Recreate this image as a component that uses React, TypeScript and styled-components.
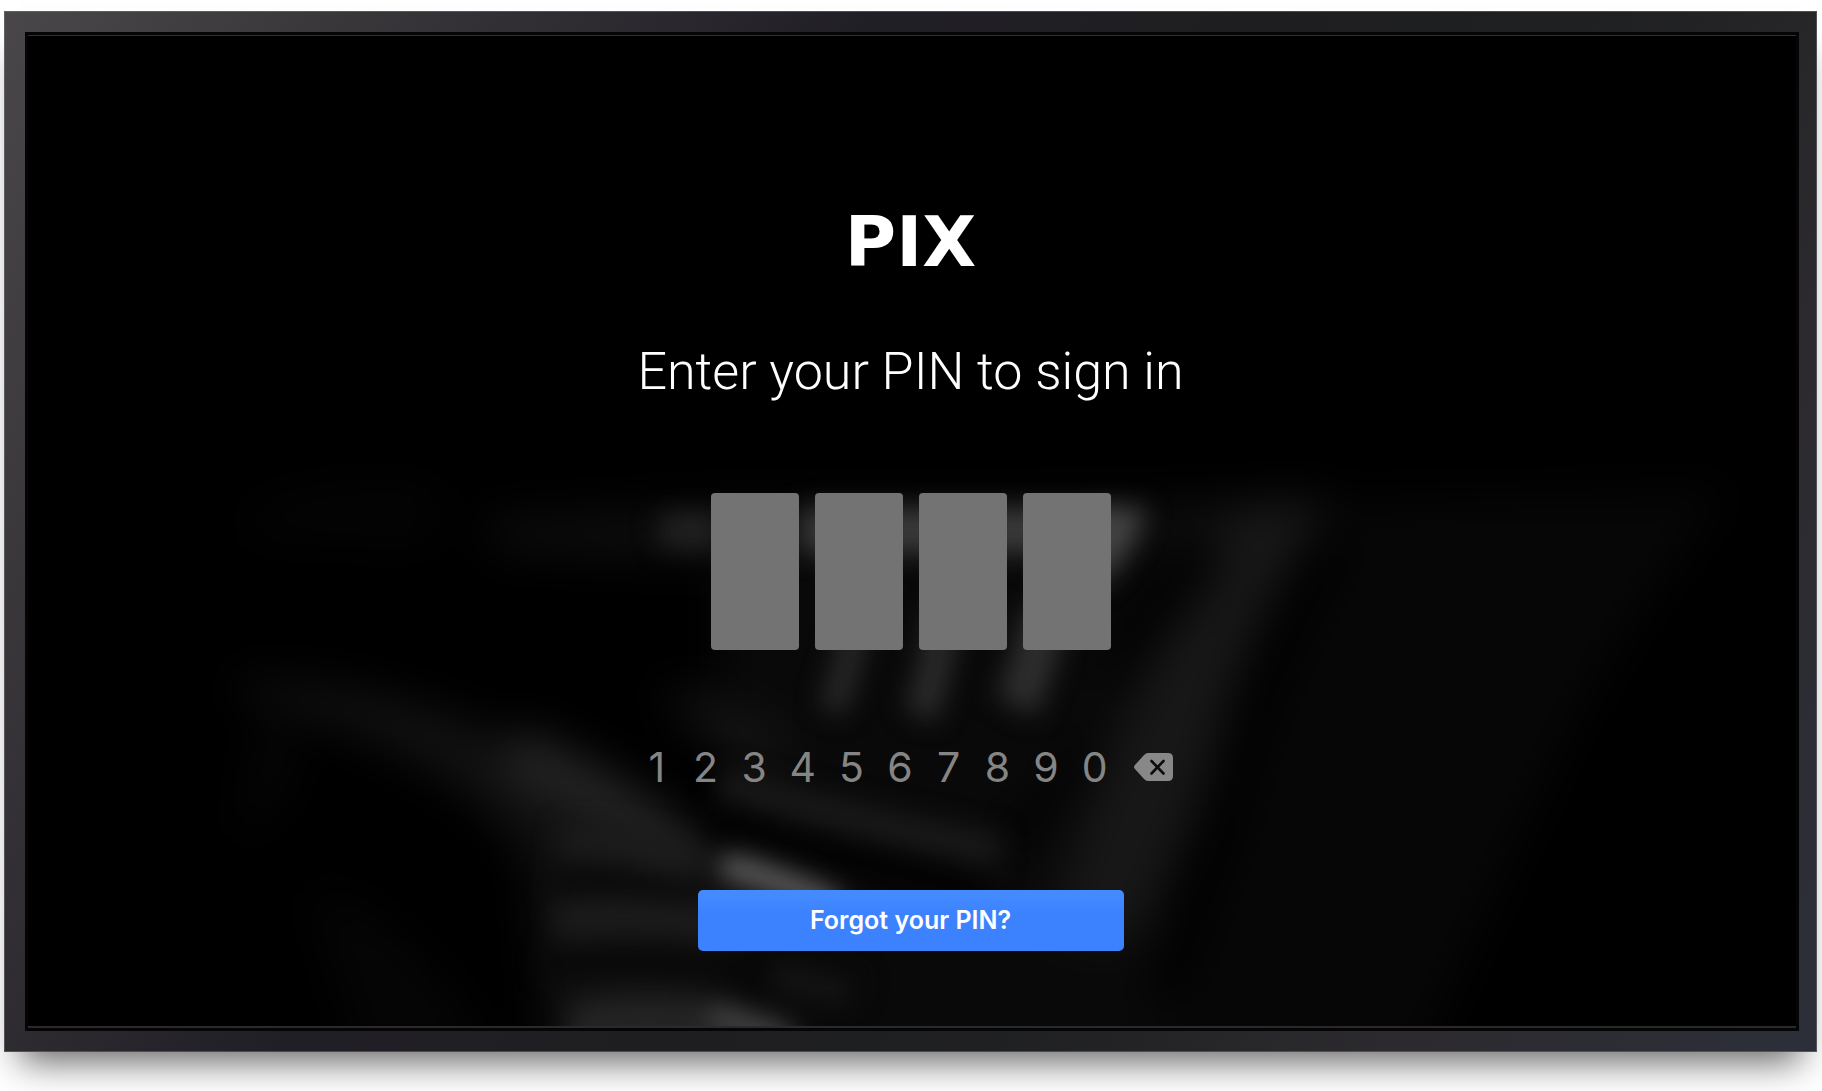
import React, { useRef, useState } from "react";
import styled, { createGlobalStyle } from "styled-components";

const GlobalStyle = createGlobalStyle`
  *, *::before, *::after { box-sizing: border-box; }
  body {
    margin: 0;
    background: #ffffff;
    font-family: Inter, "Liberation Sans", sans-serif;
  }
  button, input { font: inherit; }
`;

const Page = styled.div`
  display: flex;
  min-height: 100vh;
  padding: 11px 5px 39px 4px;
`;

const Bezel = styled.div`
  flex: 1;
  display: flex;
  border: 1px solid rgba(120, 124, 128, 0.5);
  padding: 20px 17px 20px 20px;
  background: linear-gradient(
    120deg,
    #4a474a 0%,
    #3a373b 14%,
    #211f26 36%,
    #1e1e20 52%,
    #1f2021 66%,
    #2c2a2e 82%,
    #2c2f3a 100%
  );
  background-origin: border-box;
  box-shadow: 0 26px 34px -16px rgba(0, 0, 0, 0.6);
`;

const Screen = styled.main`
  position: relative;
  flex: 1;
  display: flex;
  flex-direction: column;
  border: 3px solid #050506;
  background: #000000;
  overflow: hidden;
`;

const Backdrop = styled.svg`
  position: absolute;
  inset: 0;
  width: 100%;
  height: 100%;
`;

const Content = styled.form`
  position: relative;
  flex: 1;
  display: flex;
  flex-direction: column;
  align-items: center;
  padding: 170px 27px 72px 24px;
  border-top: 1px solid #303030;
  border-bottom: 2px solid #2a2a2a;
`;

const Logo = styled.div`
  color: #ffffff;
  font-family: "DejaVu Sans", sans-serif;
  font-size: 70px;
  font-weight: 700;
  line-height: 72px;
`;

const Title = styled.h1`
  margin: 58px 0 0;
  color: #ffffff;
  font-family: Roboto, "Liberation Sans", sans-serif;
  font-size: 52px;
  font-weight: 300;
  line-height: 72px;
  text-align: center;
`;

const PinCells = styled.div`
  display: flex;
  gap: 16px;
  margin-top: 85px;
`;

const PinCell = styled.input`
  width: 88px;
  height: 157px;
  padding: 0;
  border: 0;
  border-radius: 4px;
  background: #737373;
  color: #ffffff;
  font-size: 64px;
  text-align: center;
  outline: none;
`;

const Keypad = styled.div`
  display: grid;
  grid-template-columns: repeat(10, 7fr) 10fr;
  width: 100%;
  max-width: 556px;
  margin-top: 89px;
`;

const Key = styled.button`
  display: flex;
  align-items: center;
  justify-content: center;
  height: 56px;
  padding: 0;
  border: 0;
  background: transparent;
  color: #858585;
  font-size: 41px;
  font-weight: 400;
  line-height: 56px;
  cursor: pointer;
`;

const ForgotButton = styled.button`
  width: 100%;
  max-width: 426px;
  height: 61px;
  margin-top: 95px;
  padding: 0;
  border: 0;
  border-radius: 5px;
  background: linear-gradient(#468cff, #3c82ff 40%);
  color: #ffffff;
  font-size: 25px;
  font-weight: 600;
  line-height: 61px;
  cursor: pointer;
`;

const DIGITS = ["1", "2", "3", "4", "5", "6", "7", "8", "9", "0"];
const CELLS = [0, 1, 2, 3];

function Drapery() {
  return (
    <Backdrop viewBox="28 35 1768 992" preserveAspectRatio="none" aria-hidden="true">
      <defs>
        <filter id="soft" x="0" y="400" width="1822" height="700" filterUnits="userSpaceOnUse" colorInterpolationFilters="sRGB">
          <feGaussianBlur stdDeviation="13" />
        </filter>
        <filter id="softer" x="0" y="400" width="1822" height="700" filterUnits="userSpaceOnUse" colorInterpolationFilters="sRGB">
          <feGaussianBlur stdDeviation="22" />
        </filter>
      </defs>
      <g filter="url(#softer)">
        <path d="M240 515 Q320 475 440 490 L430 545 L250 535Z" fill="#040404" />
        <path d="M1340 500 L1730 490 Q1640 600 1570 730 Q1500 880 1420 1060 L1150 1060 Q1190 760 1340 500Z" fill="#060606" />
        <path d="M480 520 L720 505 L1330 500 L1300 550 L1180 560 L700 560 L500 550Z" fill="#0d0d0d" />
        <path d="M720 550 H1150 L1180 1060 H760 L720 720Z" fill="#090909" />
        <path d="M1230 510 Q1290 490 1330 505 Q1250 620 1220 740 Q1180 880 1130 940 L1050 930 Q1090 780 1150 660 Q1190 570 1230 510Z" fill="#171717" />
        <path d="M240 680 Q370 680 490 730 Q620 780 700 850 L740 900 L730 1060 L550 1060 L530 860 Q460 750 240 695Z" fill="#111111" />
        <path d="M285 690 Q320 780 240 840 L255 750Z" fill="#060606" />
        <path d="M310 890 Q400 900 500 1060 L360 1060Z" fill="#050505" />
        <path d="M660 690 Q730 690 800 750 L760 760 Q710 750 660 690Z" fill="#151515" />
        <path d="M1180 540 Q1230 530 1220 570 Q1160 640 1110 720 L1110 620Z" fill="#030303" />
        <path d="M1335 540 Q1250 680 1220 830 L1160 1000" stroke="#000000" strokeWidth="30" fill="none" />
        <path d="M1095 740 Q1050 820 1000 840" stroke="#030303" strokeWidth="30" fill="none" />
        <path d="M510 750 Q610 790 690 860" stroke="#242424" strokeWidth="48" fill="none" />
      </g>
      <g filter="url(#soft)">
        <path d="M720 782 Q830 815 1000 850" stroke="#1a1a1a" strokeWidth="30" fill="none" />
        <path d="M720 812 Q820 856 980 890" stroke="#010101" strokeWidth="26" fill="none" />
        <path d="M560 842 Q630 838 700 860" stroke="#1c1c1c" strokeWidth="30" fill="none" />
        <path d="M550 882 Q640 876 720 905" stroke="#080808" strokeWidth="22" fill="none" />
        <path d="M555 920 Q640 908 740 925" stroke="#1c1c1c" strokeWidth="34" fill="none" />
        <path d="M545 965 Q680 950 860 985" stroke="#070707" strokeWidth="24" fill="none" />
        <path d="M730 866 Q780 880 830 902" stroke="#646464" strokeWidth="24" strokeLinecap="round" fill="none" />
        <path d="M570 1005 Q680 980 800 1027 L790 1060 L570 1060Z" fill="#242424" />
        <path d="M720 1014 L780 1034" stroke="#484848" strokeWidth="22" strokeLinecap="round" />
        <path d="M770 974 L850 992" stroke="#161616" strokeWidth="24" />
        <path d="M855 620 Q847 680 830 710" stroke="#2a2a2a" strokeWidth="26" fill="none" />
        <path d="M945 610 Q934 680 920 715" stroke="#2c2c2c" strokeWidth="32" fill="none" />
        <path d="M1045 610 Q1034 670 1015 705" stroke="#2e2e2e" strokeWidth="44" fill="none" />
        <path d="M660 530 H720" stroke="#222222" strokeWidth="34" />
        <path d="M800 508 H1120 V552 H800Z" fill="#3a3a3a" />
        <path d="M1090 505 L1146 508 Q1136 550 1095 590Z" fill="#444444" />
      </g>
    </Backdrop>
  );
}

function DeleteIcon() {
  return (
    <svg width="39" height="28" viewBox="0 0 39 28" aria-hidden="true">
      <path
        d="M14 0 H34 Q39 0 39 5 V23 Q39 28 34 28 H14 Q12 28 10 26 L1 16 Q-1 14 1 12 L10 2 Q12 0 14 0Z"
        fill="#888888"
      />
      <path d="M17.5 8 L29.5 20.5 M29.5 8 L17.5 20.5" stroke="#0c0c0c" strokeWidth="2.6" strokeLinecap="round" />
    </svg>
  );
}

export default function App() {
  const [pin, setPin] = useState("");
  const cells = useRef<Array<HTMLInputElement | null>>([]);

  const press = (digit: string) => setPin((p) => (p + digit).slice(0, 4));
  const erase = () => setPin((p) => p.slice(0, -1));

  const onCellChange = (index: number, value: string) => {
    const clean = value.replace(/\D/g, "");
    setPin((p) => (p.slice(0, index) + clean).slice(0, 4));
    if (clean) cells.current[index + 1]?.focus();
  };

  return (
    <>
      <GlobalStyle />
      <Page>
        <Bezel>
          <Screen>
            <Drapery />
            <Content onSubmit={(e) => e.preventDefault()}>
              <Logo>PIX</Logo>
              <Title>Enter your PIN to sign in</Title>
              <PinCells role="group" aria-label="PIN">
                {CELLS.map((i) => (
                  <PinCell
                    key={i}
                    ref={(el) => {
                      cells.current[i] = el;
                    }}
                    type="password"
                    inputMode="numeric"
                    maxLength={1}
                    autoComplete="off"
                    aria-label={`PIN digit ${i + 1}`}
                    value={pin[i] ?? ""}
                    onChange={(e) => onCellChange(i, e.target.value)}
                  />
                ))}
              </PinCells>
              <Keypad>
                {DIGITS.map((d) => (
                  <Key key={d} type="button" onClick={() => press(d)}>
                    {d}
                  </Key>
                ))}
                <Key type="button" aria-label="Delete" onClick={erase}>
                  <DeleteIcon />
                </Key>
              </Keypad>
              <ForgotButton type="button">Forgot your PIN?</ForgotButton>
            </Content>
          </Screen>
        </Bezel>
      </Page>
    </>
  );
}
